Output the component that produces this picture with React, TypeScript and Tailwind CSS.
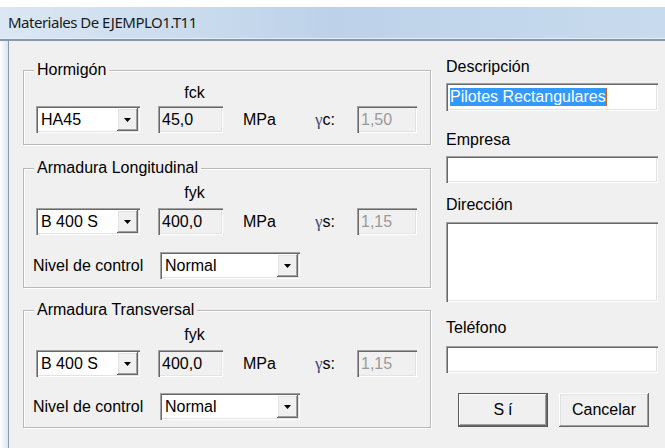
import React from "react";

const sunken =
  "shadow-[inset_1px_1px_0_#a0a0a0,inset_2px_2px_0_#696969,inset_-1px_-1px_0_#ffffff,inset_-2px_-2px_0_#e3e3e3]";
const raised =
  "shadow-[inset_-1px_-1px_0_#696969,inset_1px_1px_0_#ffffff,inset_-2px_-2px_0_#a0a0a0,inset_2px_2px_0_#e3e3e3]";

function Arrow() {
  return (
    <svg width="7" height="4" viewBox="0 0 7 4">
      <path d="M0 0h7L3.5 4z" fill="#000" />
    </svg>
  );
}

function Combo({ value, width }: { value: string; width: string }) {
  return (
    <div className={`flex h-[27px] shrink-0 bg-white p-[2px] ${sunken} ${width}`}>
      <div className="flex flex-1 items-center pl-[3px] leading-[18px]">{value}</div>
      <div className={`flex h-full w-[21px] items-center justify-center bg-[#f0f0f0] ${raised}`}>
        <Arrow />
      </div>
    </div>
  );
}

function Field({
  value,
  width,
  disabled,
}: {
  value: string;
  width: string;
  disabled?: boolean;
}) {
  return (
    <div
      className={`flex h-[27px] shrink-0 items-center bg-[#f0f0f0] pl-[4px] leading-[18px] ${sunken} ${width} ${
        disabled ? "text-[#9a9a9a]" : "text-black"
      }`}
    >
      {value}
    </div>
  );
}

function Legend({ children }: { children: React.ReactNode }) {
  return (
    <div className="-mt-[10px] ml-[10px] h-[18px] w-fit bg-[#f0f0f0] px-[3px] leading-[18px]">
      {children}
    </div>
  );
}

function ValueRow({
  grade,
  value,
  factorSub,
  factor,
}: {
  grade: string;
  value: string;
  factorSub: string;
  factor: string;
}) {
  return (
    <div className="mt-[6px] flex items-center">
      <div className="ml-[12px]">
        <Combo value={grade} width="w-[104px]" />
      </div>
      <div className="ml-[18px]">
        <Field value={value} width="w-[65px]" />
      </div>
      <div className="ml-[20px] w-[72px] leading-[18px]">MPa</div>
      <div className="w-[42px] leading-[18px]">
        <span className="font-['Liberation_Serif',serif] text-[17px] text-[#3d4c78]">γ</span>
        {factorSub}:
      </div>
      <Field value={factor} width="w-[60px]" disabled />
    </div>
  );
}

function ControlRow() {
  return (
    <div className="flex items-center">
      <div className="ml-[9px] w-[127px] leading-[18px]">Nivel de control</div>
      <Combo value="Normal" width="w-[140px]" />
    </div>
  );
}

const group = "flex flex-col border border-[#b9b9b9] shadow-[inset_1px_1px_0_#ffffff,1px_1px_0_#ffffff]";

export default function App() {
  return (
    <div className="flex h-[448px] w-[665px] flex-col overflow-hidden bg-[#f7fafd] font-['Liberation_Sans',Arial,sans-serif] text-[16px] text-black">
      <div className="h-[7px] shrink-0 bg-white" />
      <div className="flex h-[31px] shrink-0 items-center bg-linear-to-r from-[#dbe7f3] via-[#bdd2e9] to-[#c8dbee] pl-[8px] font-['Noto_Sans',sans-serif] text-[15px] tracking-[-0.5px] text-[#1b1b1b]">
        Materiales De EJEMPLO1.T11
      </div>
      <div className="h-px shrink-0 bg-[#e4edf6]" />
      <div className="h-[2px] shrink-0 bg-[#8798ad]" />
      <div className="flex flex-1">
        <div className="w-[9px] border-r border-[#8a99ab] bg-linear-to-r from-white to-[#d6e4f2]" />
        <div className="flex flex-1 items-start bg-[#f0f0f0] pl-[14px]">
          {/* material groups */}
          <div className="flex w-[408px] flex-col pt-[29px]">
            <div className={`h-[75px] ${group}`}>
              <Legend>Hormigón</Legend>
              <div className="ml-[138px] mt-[5px] w-[65px] text-center leading-[18px]">fck</div>
              <div className="-mt-[2px]">
                <ValueRow grade="HA45" value="45,0" factorSub="c" factor="1,50" />
              </div>
            </div>

            <div className={`mt-[23px] h-[120px] ${group}`}>
              <Legend>Armadura Longitudinal</Legend>
              <div className="ml-[138px] mt-[7px] w-[65px] text-center leading-[18px]">fyk</div>
              <ValueRow grade="B 400 S" value="400,0" factorSub="s" factor="1,15" />
              <div className="mt-[17px]">
                <ControlRow />
              </div>
            </div>

            <div className={`mt-[22px] h-[118px] ${group}`}>
              <Legend>Armadura Transversal</Legend>
              <div className="ml-[138px] mt-[7px] w-[65px] text-center leading-[18px]">fyk</div>
              <ValueRow grade="B 400 S" value="400,0" factorSub="s" factor="1,15" />
              <div className="mt-[16px]">
                <ControlRow />
              </div>
            </div>
          </div>

          {/* project details */}
          <div className="ml-[15px] flex w-[212px] flex-col pt-[17px]">
            <div className="h-[18px] leading-[18px]">Descripción</div>
            <div className={`mt-[7px] flex h-[28px] items-center bg-white pl-[4px] ${sunken}`}>
              <span className="bg-[#3399ff] leading-[18px] text-white">Pilotes Rectangulares</span>
              <span className="h-[18px] w-px bg-[#c06a20]" />
            </div>

            <div className="mt-[20px] h-[18px] leading-[18px]">Empresa</div>
            <div className={`mt-[7px] h-[27px] bg-white ${sunken}`} />

            <div className="mt-[13px] h-[18px] leading-[18px]">Dirección</div>
            <div className={`mt-[8px] h-[80px] bg-white ${sunken}`} />

            <div className="mt-[17px] h-[18px] leading-[18px]">Teléfono</div>
            <div className={`mt-[9px] h-[27px] bg-white ${sunken}`} />

            <div className="ml-[12px] mt-[20px] flex gap-[11px]">
              <button className="flex h-[34px] w-[90px] items-center justify-center border border-[#5a5a5a] bg-[#f0f0f0] shadow-[inset_-1px_-1px_0_#696969,inset_1px_1px_0_#ffffff,inset_-2px_-2px_0_#a0a0a0] leading-[18px]">
                <span className="mr-[4px]">S</span>í
              </button>
              <button className={`flex h-[34px] w-[90px] items-center justify-center bg-[#f0f0f0] leading-[18px] ${raised}`}>
                Cancelar
              </button>
            </div>
          </div>
        </div>
      </div>
    </div>
  );
}
